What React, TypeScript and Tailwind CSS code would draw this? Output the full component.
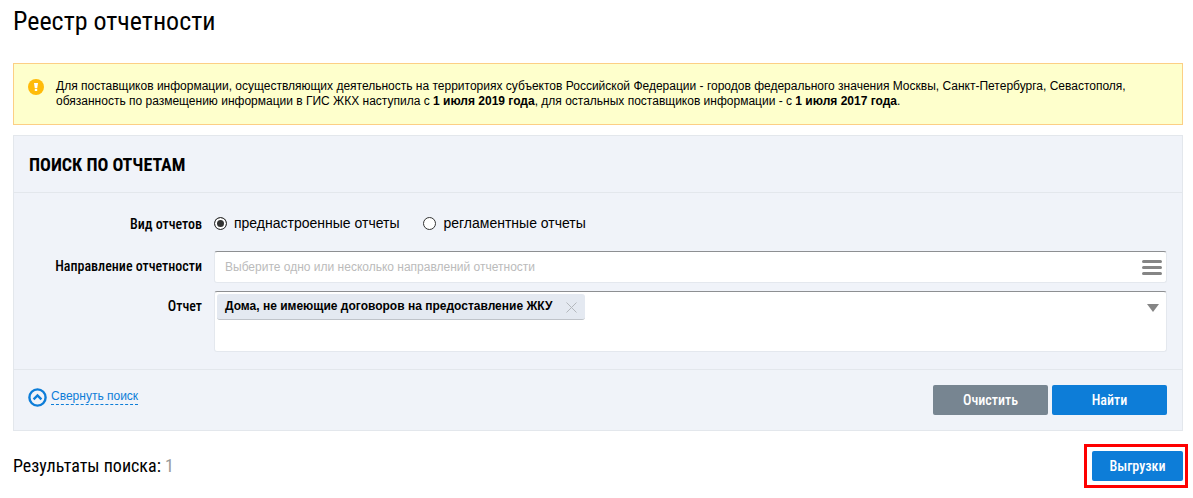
import { useState } from "react";

const heading = "font-['Roboto_Condensed','Liberation_Sans_Narrow',Roboto,sans-serif]";

const reportTypes = [
  { value: "preset", label: "преднастроенные отчеты" },
  { value: "regulated", label: "регламентные отчеты" },
];

function WarningIcon() {
  return (
    <svg width="16" height="16" viewBox="0 0 16 16" className="shrink-0" aria-hidden="true">
      <circle cx="8" cy="8" r="8" fill="#ffbb0a" />
      <path d="M6 4h4L9.2 9.2H6.8z" fill="#fff" />
      <rect x="6.8" y="10" width="2.4" height="2" fill="#fff" />
    </svg>
  );
}

function CollapseIcon() {
  return (
    <svg width="19" height="19" viewBox="0 0 19 19" fill="none" stroke="#0d7dd8" aria-hidden="true">
      <circle cx="9.5" cy="9.5" r="8.1" strokeWidth="2.4" />
      <path d="M5.6 11.3 9.5 7.5l3.9 3.8" strokeWidth="2.4" />
    </svg>
  );
}

function MenuIcon() {
  return (
    <svg width="20" height="15" viewBox="0 0 20 15" stroke="#858585" strokeWidth="3" strokeLinecap="round" aria-hidden="true">
      <path d="M1.5 1.5h17M1.5 7.5h17M1.5 13.5h17" />
    </svg>
  );
}

function Notice() {
  return (
    <div className="mt-6 flex gap-3 border border-[#fccf85] bg-[#feffcc] py-[15px] pl-[14px] pr-[15px]">
      <WarningIcon />
      <p className="text-[12px] leading-[15px]">
        Для поставщиков информации, осуществляющих деятельность на территориях субъектов Российской
        Федерации - городов федерального значения Москвы, Санкт-Петербурга, Севастополя, обязанность
        по размещению информации в ГИС ЖКХ наступила с <b>1 июля 2019 года</b>, для остальных
        поставщиков информации - с <b>1 июля 2017 года</b>.
      </p>
    </div>
  );
}

function SearchPanel() {
  const [type, setType] = useState("preset");
  const [report, setReport] = useState("Дома, не имеющие договоров на предоставление ЖКУ");

  const label = `${heading} w-[200px] shrink-0 pr-3 text-right text-[14px] font-medium leading-[30px]`;
  const field = "flex-1 rounded-[3px] border border-[#e4e8ee] border-t-[#8d8f92] bg-white";

  return (
    <form className="mt-[10px] border border-[#e3e7ec] bg-[#f0f3f9]" onSubmit={(e) => e.preventDefault()}>
      <h2 className={`${heading} border-b border-[#e3e7ec] px-[15px] pb-[15px] pt-[17px] text-[18px] font-bold uppercase leading-6`}>
        Поиск по отчетам
      </h2>

      <div className="flex flex-col gap-2 border-b border-[#e3e7ec] pb-[17px] pr-[15px] pt-4">
        <div className="mb-1 flex" role="radiogroup" aria-labelledby="type-label">
          <span id="type-label" className={label}>
            Вид отчетов
          </span>
          <div className="flex h-7 items-center gap-6">
            {reportTypes.map((t) => (
              <label key={t.value} className="flex items-center gap-[7px] text-[14px] leading-5">
                <input
                  type="radio"
                  name="type"
                  value={t.value}
                  checked={type === t.value}
                  onChange={() => setType(t.value)}
                  className="size-[13px] appearance-none rounded-full border border-[#333] bg-white checked:bg-[#333] checked:shadow-[inset_0_0_0_2px_#fff]"
                />
                {t.label}
              </label>
            ))}
          </div>
        </div>

        <div className="flex">
          <label htmlFor="direction" className={label}>
            Направление отчетности
          </label>
          <div className={`${field} flex h-8 items-center pr-1`}>
            <input
              id="direction"
              type="text"
              placeholder="Выберите одно или несколько направлений отчетности"
              className="min-w-0 flex-1 px-[10px] text-[12px] leading-5 outline-none placeholder:text-[#bbb]"
            />
            <button type="button" aria-label="Выбрать">
              <MenuIcon />
            </button>
          </div>
        </div>

        <div className="flex">
          <label htmlFor="report" className={label}>
            Отчет
          </label>
          <div className={`${field} flex min-h-[61px] items-start p-[2px] pr-[7px]`}>
            {report && (
              <span className="flex h-[26px] items-start gap-[14px] rounded-[3px] border-b border-[#bfc3c9] bg-[#e4e9f1] px-2 text-[12px] font-bold leading-6">
                {report}
                <button type="button" aria-label="Удалить" className="mt-2" onClick={() => setReport("")}>
                  <svg width="11" height="11" viewBox="0 0 11 11" stroke="#b4b8bd" aria-hidden="true">
                    <path d="M.5.5l10 10M10.5.5l-10 10" />
                  </svg>
                </button>
              </span>
            )}
            <input id="report" type="text" className="min-w-0 flex-1 px-2 text-[12px] leading-6 outline-none" />
            <button type="button" aria-label="Открыть список" className="mt-[10px]">
              <svg width="12" height="8" viewBox="0 0 12 8" fill="#858585" aria-hidden="true">
                <path d="M0 0h12L6 8z" />
              </svg>
            </button>
          </div>
        </div>
      </div>

      <div className="flex items-start justify-between py-[15px] pl-[14px] pr-[15px]">
        <a href="#" className="mt-[3px] flex items-start gap-1 text-[12px] leading-4 text-[#0d7dd8]">
          <CollapseIcon />
          <span className="border-b border-dashed border-[#0d7dd8]">Свернуть поиск</span>
        </a>
        <div className="flex gap-1">
          <button type="reset" className={`${heading} h-[30px] w-[115px] rounded-[2px] bg-[#778591] text-[14px] font-medium text-white`}>
            Очистить
          </button>
          <button type="submit" className={`${heading} h-[30px] w-[115px] rounded-[2px] bg-[#0d7dd8] text-[14px] font-medium text-white`}>
            Найти
          </button>
        </div>
      </div>
    </form>
  );
}

export default function App() {
  return (
    <main className="bg-white pb-[10px] pl-[13px] pr-[10px] pt-[3px] font-['Liberation_Sans',Arial,sans-serif] text-black">
      <h1 className={`${heading} text-[26px] leading-9`}>Реестр отчетности</h1>
      <Notice />
      <SearchPanel />
      <div className="mt-[13px] flex items-center justify-between">
        <p className={`${heading} text-[18px] leading-6`}>
          Результаты поиска: <span className="text-[#999]">1</span>
        </p>
        <div className="-mr-[5px] border-3 border-[#fe0000] py-1 pl-[5px] pr-[2px]">
          <button type="button" className={`${heading} h-[30px] w-[91px] rounded-[2px] bg-[#0d7dd8] text-[14px] font-medium text-white`}>
            Выгрузки
          </button>
        </div>
      </div>
    </main>
  );
}
